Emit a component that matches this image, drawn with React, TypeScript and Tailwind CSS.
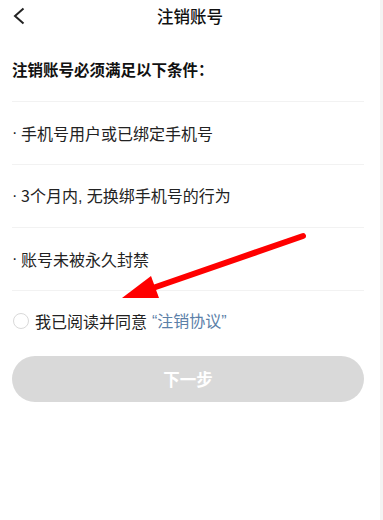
import React from "react";

const font = { fontFamily: '"Noto Sans CJK SC", "Noto Sans", sans-serif' };
const latin = { fontFamily: '"Liberation Sans", Arial, sans-serif' };

function Row({ children }: { children: React.ReactNode }) {
  return (
    <div className="flex h-[63px] items-center border-b border-[#f2f2f2] text-[16px] text-[#222]">
      <span className="w-[9px]" style={latin}>·</span>
      <span>{children}</span>
    </div>
  );
}

export default function App() {
  return (
    <div className="relative flex h-[520px] w-[383px] bg-white" style={font}>
      <div className="flex w-[380px] flex-col">
        <div className="grid h-8 grid-cols-[40px_1fr_40px] items-center">
          <div className="flex items-center pl-[13px]">
            <svg width="12" height="18" viewBox="0 0 12 18" fill="none">
              <path d="M10.5 1.5 L2 9 L10.5 16.5" stroke="#222" strokeWidth="2" strokeLinejoin="miter" />
            </svg>
          </div>
          <div className="text-center text-[16.5px] font-medium text-[#111]">注销账号</div>
          <div />
        </div>
        <div className="ml-3 w-[352px]">
          <div className="mt-[25px] pb-[20px] text-[15.5px] font-bold leading-6 text-[#111]">
            注销账号必须满足以下条件：
          </div>
          <div className="border-t border-[#f2f2f2]">
            <Row>手机号用户或已绑定手机号</Row>
            <Row>
              3个月内<span style={latin}>, </span>无换绑手机号的行为
            </Row>
            <Row>账号未被永久封禁</Row>
          </div>
          <div className="flex h-[60px] items-center">
            <span className="ml-[1px] h-[16px] w-[16px] rounded-full border border-[#d9d9d9]" />
            <span className="ml-[6px] text-[16px] text-[#222]">我已阅读并同意</span>
            <span className="ml-[5px] text-[16px] text-[#5b80a8]">
              <span style={latin}>“</span>注销协议<span style={latin}>”</span>
            </span>
          </div>
          <button className="mt-[5px] flex h-[46px] w-full items-center justify-center rounded-full bg-[#d9d9d9] text-[16.5px] font-bold text-white">
            下一步
          </button>
        </div>
      </div>
      <div className="h-[520px] w-[3px] bg-[#f4f4f4]" />
      <svg className="pointer-events-none absolute left-0 top-0" width="383" height="520">
        <line x1="303" y1="236" x2="150" y2="289" stroke="#ff0000" strokeWidth="6" strokeLinecap="round" />
        <polygon points="122,298 151,276 159,298" fill="#ff0000" />
      </svg>
    </div>
  );
}
